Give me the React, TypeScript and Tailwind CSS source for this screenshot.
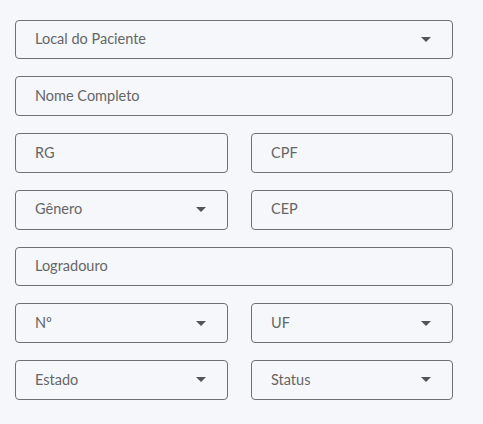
import React from "react";

const Caret = () => (
  <svg width="10" height="5" viewBox="0 0 10 5" className="shrink-0">
    <path d="M0 0h10L5 5z" fill="#555" />
  </svg>
);

const Field = ({
  label,
  select,
  className = "",
}: {
  label: string;
  select?: boolean;
  className?: string;
}) => (
  <div
    className={`h-[39.75px] flex items-center justify-between pl-[19px] pr-[21px] border border-[#707070] rounded-[4px] bg-[#f5f7fb] text-[14.5px] text-[#666] ${className}`}
  >
    <span className="-mt-px">{label}</span>
    {select && <Caret />}
  </div>
);

export default function App() {
  return (
    <div
      className="w-[483px] h-[424px] bg-[#f5f7fb] pl-[15px] pt-[19.5px]"
      style={{ fontFamily: "Lato, 'Noto Sans', sans-serif" }}
    >
      <div className="w-[438px] flex flex-col gap-[17px]">
        <Field label="Local do Paciente" select />
        <Field label="Nome Completo" />
        <div className="flex justify-between">
          <Field label="RG" className="w-[213px]" />
          <Field label="CPF" className="w-[202px]" />
        </div>
        <div className="flex justify-between">
          <Field label="Gênero" select className="w-[213px]" />
          <Field label="CEP" className="w-[202px]" />
        </div>
        <Field label="Logradouro" />
        <div className="flex justify-between">
          <Field label="Nº" select className="w-[213px]" />
          <Field label="UF" select className="w-[202px]" />
        </div>
        <div className="flex justify-between">
          <Field label="Estado" select className="w-[213px]" />
          <Field label="Status" select className="w-[202px]" />
        </div>
      </div>
    </div>
  );
}
